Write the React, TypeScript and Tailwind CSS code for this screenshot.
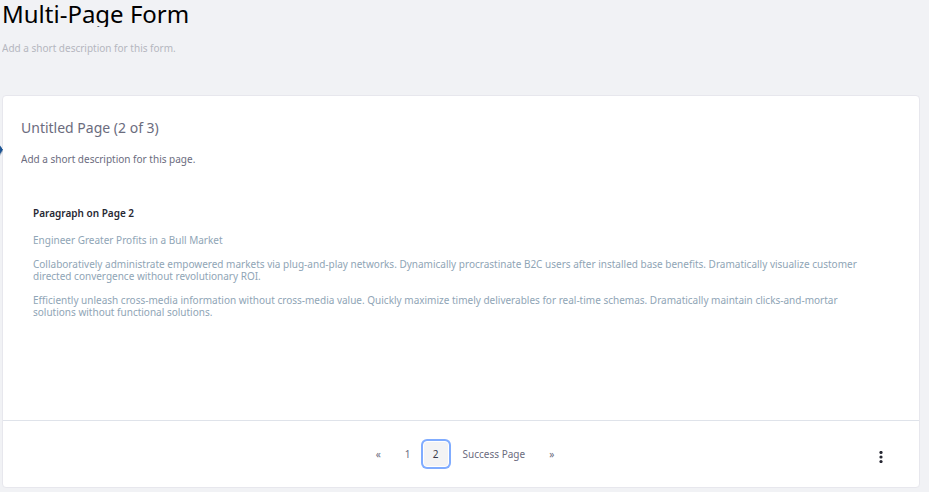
const paragraphs = [
  "Engineer Greater Profits in a Bull Market",
  "Collaboratively administrate empowered markets via plug-and-play networks. Dynamically procrastinate B2C users after installed base benefits. Dramatically visualize customer directed convergence without revolutionary ROI.",
  "Efficiently unleash cross-media information without cross-media value. Quickly maximize timely deliverables for real-time schemas. Dramatically maintain clicks-and-mortar solutions without functional solutions.",
];

function FormHeader() {
  return (
    <header className="flex flex-col">
      <input
        aria-label="Form title"
        defaultValue="Multi-Page Form"
        className="h-[27px] w-full bg-transparent text-[24px] text-black outline-none"
      />
      <input
        aria-label="Form description"
        placeholder="Add a short description for this form."
        className="mt-[13px] h-4 w-full bg-transparent text-[10px] outline-none placeholder:text-[#b5b7bf]"
      />
    </header>
  );
}

function Pagination() {
  const item =
    "flex h-7 items-center justify-center rounded px-3 text-[10px] text-[#6b6c7e]";
  return (
    <nav aria-label="Form pages" className="flex items-center pl-2">
      <button type="button" aria-label="Previous page" className={item}>
        «
      </button>
      <button type="button" className={item}>
        1
      </button>
      <button
        type="button"
        aria-current="page"
        className="mr-0.5 flex h-[26px] w-[26px] items-center justify-center rounded border border-white bg-[#f3f3f4] text-[10px] text-[#393a4a] ring-2 ring-[#80acff]"
      >
        2
      </button>
      <button type="button" className={item}>
        Success Page
      </button>
      <button type="button" aria-label="Next page" className={item}>
        »
      </button>
    </nav>
  );
}

export default function App() {
  return (
    <div className="relative min-h-screen overflow-hidden bg-[#f1f2f5] pr-[9px] pb-1 pl-[2px] font-['Noto_Sans',sans-serif]">
      <FormHeader />
      <main className="mt-[39px] rounded border border-[#e7e7ed] bg-white">
        <section className="min-h-[324px] px-[18px] pt-5">
          <input
            aria-label="Page title"
            placeholder="Untitled Page (2 of 3)"
            className="block h-[22px] w-full text-[14px] outline-none placeholder:text-[#6b6c7e]"
          />
          <input
            aria-label="Page description"
            placeholder="Add a short description for this page."
            className="mt-[13px] block h-4 w-full text-[10px] outline-none placeholder:text-[#6b6c7e]"
          />
          <article className="mt-10 pr-6 pl-3 text-[10px] leading-3 text-[#8fa5b6]">
            <h2 className="mb-[15px] font-semibold text-[#272833]">
              Paragraph on Page 2
            </h2>
            <div className="flex flex-col gap-3">
              {paragraphs.map((text) => (
                <p key={text}>{text}</p>
              ))}
            </div>
          </article>
        </section>
        <footer className="grid h-[67px] grid-cols-[1fr_auto_1fr] items-center border-t border-[#dfe3ea]">
          <div className="col-start-2">
            <Pagination />
          </div>
          <button
            type="button"
            aria-label="Page actions"
            className="mt-1.5 mr-7 flex h-6 w-5 items-center justify-center justify-self-end text-[#272833]"
          >
            <svg width="4" height="12" viewBox="0 0 4 12" fill="currentColor">
              <circle cx="2" cy="1.5" r="1.6" />
              <circle cx="2" cy="6" r="1.6" />
              <circle cx="2" cy="10.5" r="1.6" />
            </svg>
          </button>
        </footer>
      </main>
      <svg
        aria-hidden="true"
        width="4"
        height="12"
        viewBox="0 0 4 12"
        className="absolute top-[144px] left-0"
      >
        <path d="M0 3 3 7 0 12Z" fill="#b3bdca" />
        <path d="M0 1.5 3 5.5 0 10Z" fill="#1c5494" />
      </svg>
    </div>
  );
}
